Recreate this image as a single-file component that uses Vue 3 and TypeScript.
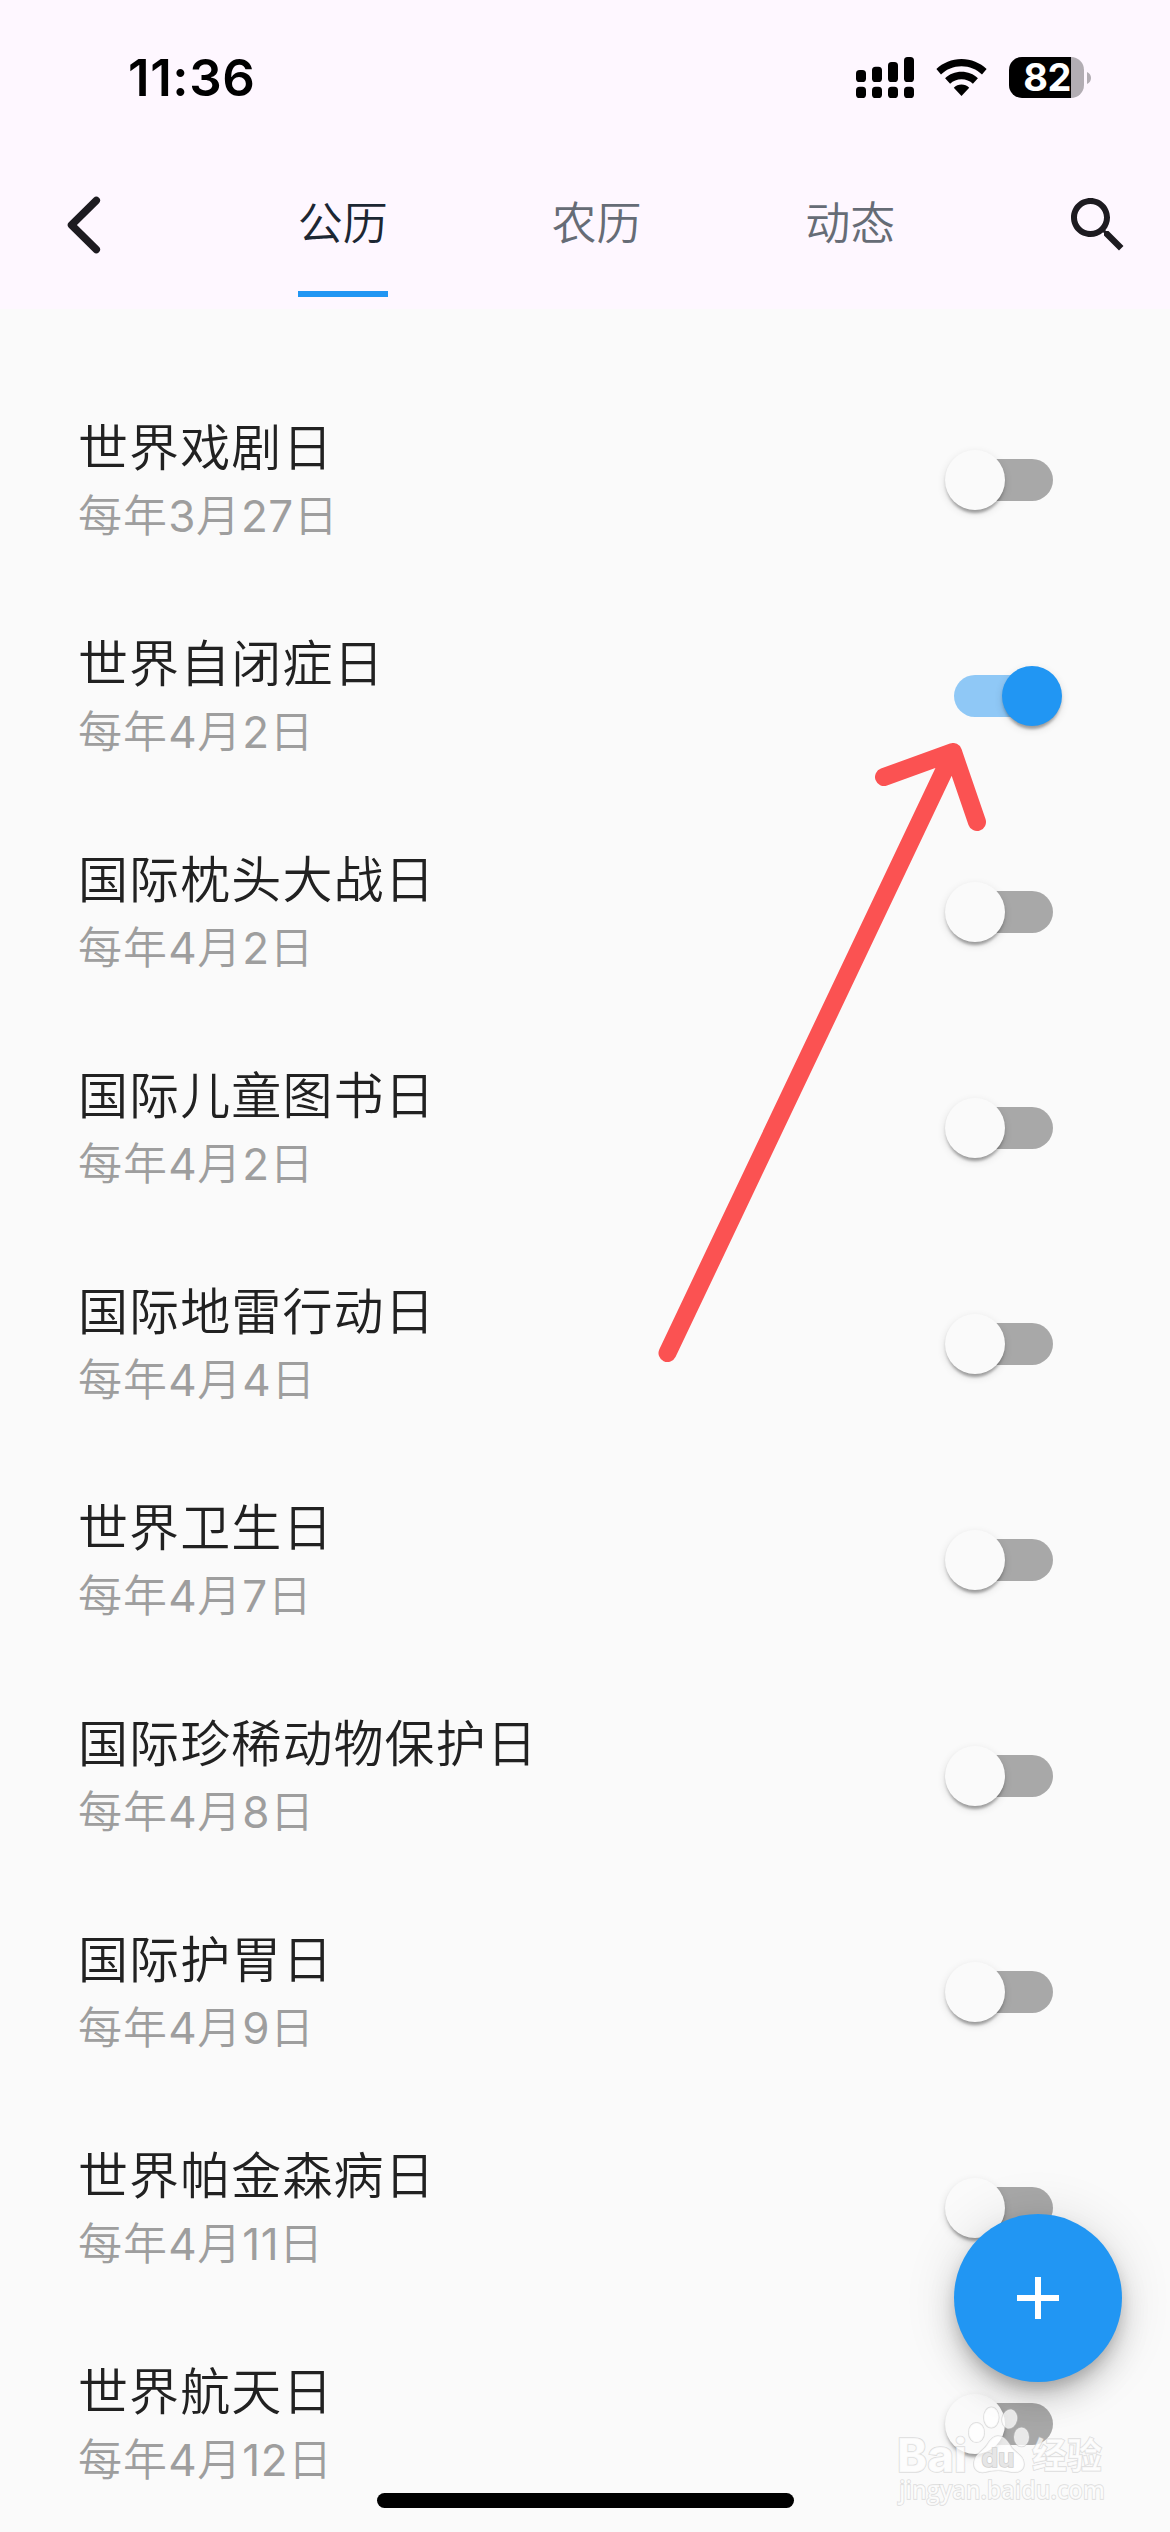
<script setup lang="ts">
import { ref } from 'vue'

interface Festival {
  name: string
  month: number
  day: number
  enabled: boolean
}

const tabs: string[] = ['公历', '农历', '动态']
const activeTab = ref(0)

const festivals = ref<Festival[]>([
  { name: '世界戏剧日', month: 3, day: 27, enabled: false },
  { name: '世界自闭症日', month: 4, day: 2, enabled: true },
  { name: '国际枕头大战日', month: 4, day: 2, enabled: false },
  { name: '国际儿童图书日', month: 4, day: 2, enabled: false },
  { name: '国际地雷行动日', month: 4, day: 4, enabled: false },
  { name: '世界卫生日', month: 4, day: 7, enabled: false },
  { name: '国际珍稀动物保护日', month: 4, day: 8, enabled: false },
  { name: '国际护胃日', month: 4, day: 9, enabled: false },
  { name: '世界帕金森病日', month: 4, day: 11, enabled: false },
  { name: '世界航天日', month: 4, day: 12, enabled: false },
])
</script>

<template>
  <div class="screen">
    <header class="header">
      <div class="status">
        <span class="time">11:36</span>
        <div class="indicators">
          <svg class="signal" width="58" height="41" viewBox="0 0 58 41">
            <rect x="0" y="13" width="10" height="12" rx="3.6" />
            <rect x="16" y="9.7" width="10" height="15.3" rx="3.6" />
            <rect x="32" y="5" width="10" height="20" rx="3.6" />
            <rect x="48" y="0" width="10" height="25" rx="3.6" />
            <rect v-for="i in 4" :key="i" :x="(i - 1) * 16" y="29.8" width="10" height="11.2" rx="3.6" />
          </svg>
          <svg class="wifi" width="51" height="37" viewBox="0 0 51 37">
            <path d="M25.5 0C35.2 0 44.200 3.800 50.600 10.100L46 15.600C40.600 10.300 33.400 7.300 25.500 7.300S10.400 10.300 5 15.600L.4 10.100C6.800 3.800 15.800 0 25.500 0Z" />
            <path d="M25.500 12.800C31.800 12.800 37.600 15.200 41.900 19.200L36.900 24.800C33.900 22 29.900 20.300 25.500 20.300S17.100 22 14.100 24.800L9.100 19.200C13.400 15.200 19.200 12.800 25.500 12.800Z" />
            <path d="M25.500 25.600C28.400 25.600 31.100 26.700 33.200 28.700L25.500 37L17.800 28.700C19.900 26.700 22.600 25.600 25.500 25.600Z" />
          </svg>
          <div class="battery">
            <span class="level">82</span>
          </div>
          <svg class="nub" width="4" height="12" viewBox="0 0 4 12"><path d="M0 0C2.400 1 4 3.200 4 6S2.400 11 0 12Z" /></svg>
        </div>
      </div>
      <nav class="bar">
        <svg class="back" width="72" height="72" viewBox="0 0 72 72">
          <path d="M48.300 11.500L23.500 36L48.300 60.500" />
        </svg>
        <div class="tabs">
          <button
            v-for="(tab, i) in tabs"
            :key="tab"
            class="tab"
            :class="{ active: i === activeTab }"
            @click="activeTab = i"
          >
            <span class="label">{{ tab }}</span>
          </button>
        </div>
        <svg class="search" width="72" height="72" viewBox="0 0 24 24">
          <path d="M15.500 14h-.79l-.28-.27C15.410 12.590 16 11.110 16 9.500 16 5.910 13.090 3 9.500 3S3 5.910 3 9.500 5.910 16 9.500 16c1.610 0 3.090-.59 4.230-1.570l.27.28v.79l5 4.990L20.490 19l-4.990-5zm-6 0C7.010 14 5 11.990 5 9.500S7.010 5 9.500 5 14 7.010 14 9.500 11.990 14 9.500 14z" />
        </svg>
      </nav>
    </header>

    <main class="list">
      <div v-for="item in festivals" :key="item.name" class="row">
        <div class="text">
          <div class="name">{{ item.name }}</div>
          <div class="date">每年<span class="num">{{ item.month }}</span>月<span class="num">{{ item.day }}</span>日</div>
        </div>
        <div class="switch" :class="{ on: item.enabled }" @click="item.enabled = !item.enabled">
          <span class="thumb"></span>
        </div>
      </div>
    </main>

    <svg class="arrow" width="350" height="640" viewBox="650 730 350 640">
      <path d="M667.500 1353L953 752M884 777L953 752L977 822" />
    </svg>

    <button class="fab">
      <svg width="72" height="72" viewBox="0 0 24 24"><path d="M19 13h-6v6h-2v-6H5v-2h6V5h2v6h6v2z" /></svg>
    </button>

    <svg class="watermark" width="230" height="130" viewBox="0 0 230 130">
      <ellipse cx="86.500" cy="42.500" rx="7.800" ry="9.800" />
      <ellipse cx="101.300" cy="27.500" rx="7.500" ry="10.200" />
      <ellipse cx="119.600" cy="29" rx="7.500" ry="9.600" transform="rotate(12 119.600 29)" />
      <ellipse cx="131.500" cy="47" rx="7.500" ry="9.600" />
      <path d="M108 46C115 46 118 52 122 58C126 63 134 66 134 74C134 81 128 83 121 82C113 80 103 80 96 82C88 84 83 79 84 72C85 64 93 61 97 55C100 50 103 46 108 46Z" />
      <text class="brand" x="7" y="81.500" textLength="70" lengthAdjust="spacingAndGlyphs">Bai</text>
      <text class="du" x="91.500" y="77" textLength="33" lengthAdjust="spacingAndGlyphs">du</text>
      <text class="cjk" x="142" y="79" textLength="70" lengthAdjust="spacingAndGlyphs">经验</text>
      <text class="url" x="9" y="109" textLength="206" lengthAdjust="spacingAndGlyphs">jingyan.baidu.com</text>
    </svg>

    <div class="home"></div>
  </div>
</template>

<style>
body {
  margin: 0;
  background: #fafafa;
}
</style>

<style scoped>
.screen {
  position: relative;
  width: 1170px;
  height: 2532px;
  overflow: hidden;
  background: #fafafa;
  font-family: Inter, 'Noto Sans CJK SC', sans-serif;
}

.header {
  height: 309px;
  background: #fef7ff;
}

.status {
  display: flex;
  justify-content: space-between;
  align-items: center;
  height: 155px;
  padding: 0 79px 0 128px;
}

.time {
  font-size: 51px;
  line-height: 60px;
  font-weight: 600;
  letter-spacing: 0.6px;
  color: #000;
}

.indicators {
  display: flex;
  align-items: center;
}

.wifi {
  margin-left: 22px;
}

.battery {
  display: flex;
  align-items: center;
  justify-content: flex-end;
  box-sizing: border-box;
  width: 75px;
  height: 41px;
  margin-left: 22px;
  padding-right: 13px;
  border-radius: 13px;
  background: linear-gradient(to right, #000 62px, #b2adb3 62px);
}

.level {
  font-size: 38px;
  line-height: 41px;
  font-weight: 650;
  letter-spacing: -0.5px;
  color: #fff;
}

.nub {
  margin-left: 3px;
  fill: #b2adb3;
}

.bar {
  display: flex;
  height: 154px;
  padding: 0 36px 0 48px;
}

.back,
.search {
  flex: none;
  margin-top: 34px;
}

.back {
  fill: none;
  stroke: #1d1b20;
  stroke-width: 7.5;
  stroke-linecap: round;
  stroke-linejoin: round;
}

.search {
  fill: #1d1b20;
}

.tabs {
  display: flex;
  flex: 1;
  padding: 0 85px 0 96px;
}

.tab {
  display: flex;
  flex: 1;
  justify-content: center;
  padding: 0;
  border: 0;
  background: none;
  font-family: inherit;
  font-size: 45px;
  font-weight: 350;
  color: #666c76;
}

.label {
  box-sizing: border-box;
  height: 142px;
  padding-top: 36px;
  border-bottom: 6px solid transparent;
  line-height: 66px;
}

.tab.active {
  color: #1c2733;
}

.tab.active .label {
  border-bottom-color: #2196f3;
}

.list {
  padding-top: 63px;
}

.row {
  display: flex;
  align-items: center;
  justify-content: space-between;
  height: 216px;
  padding: 0 117px 0 78px;
}

.name {
  margin-top: 4px;
  font-size: 50px;
  line-height: 70px;
  font-weight: 350;
  letter-spacing: 1.1px;
  color: #212121;
}

.date {
  margin-bottom: 2px;
  font-size: 44px;
  line-height: 66px;
  font-weight: 350;
  letter-spacing: 1.1px;
  color: #9e9e9e;
}

.num {
  font-weight: 400;
  letter-spacing: 0.5px;
  font-kerning: none;
}

.switch {
  display: flex;
  align-items: center;
  width: 99px;
  height: 42px;
  border-radius: 21px;
  background: #a8a8a8;
}

.thumb {
  flex: none;
  width: 60px;
  height: 60px;
  margin-left: -9px;
  border-radius: 50%;
  background: #fafafa;
  box-shadow:
    0 6px 3px -3px rgba(0, 0, 0, 0.2),
    0 3px 3px rgba(0, 0, 0, 0.14),
    0 3px 9px rgba(0, 0, 0, 0.12);
}

.switch.on {
  background: #8fc8f6;
}

.switch.on .thumb {
  margin-left: 48px;
  background: #2196f3;
}

.arrow {
  position: absolute;
  left: 650px;
  top: 730px;
  fill: none;
  stroke: #fb5252;
  stroke-width: 18;
  stroke-linecap: round;
  stroke-linejoin: round;
}

.fab {
  position: absolute;
  left: 954px;
  top: 2214px;
  display: flex;
  align-items: center;
  justify-content: center;
  width: 168px;
  height: 168px;
  padding: 0;
  border: 0;
  border-radius: 50%;
  background: #2196f3;
  box-shadow:
    0 9px 15px -3px rgba(0, 0, 0, 0.2),
    0 18px 30px rgba(0, 0, 0, 0.14),
    0 3px 54px rgba(0, 0, 0, 0.12);
}

.fab svg {
  fill: #fff;
}

.watermark {
  position: absolute;
  left: 890px;
  top: 2390px;
  overflow: visible;
  fill: rgba(255, 255, 255, 0.75);
  stroke: rgba(195, 195, 195, 0.55);
  stroke-width: 1.5;
  paint-order: stroke;
}

.brand {
  font-family: Inter, sans-serif;
  font-size: 46px;
  font-weight: 800;
}

.du {
  fill: #e6e6e6;
  stroke: #d0d0d0;
  font-family: Inter, sans-serif;
  font-size: 25px;
  font-weight: 700;
}

.cjk {
  font-family: 'Noto Sans CJK SC', sans-serif;
  font-size: 36px;
  font-weight: 700;
}

.url {
  font-family: 'Open Sans', sans-serif;
  font-size: 26px;
  font-weight: 600;
}

.home {
  position: absolute;
  left: 377px;
  top: 2493px;
  width: 417px;
  height: 15px;
  border-radius: 8px;
  background: #000;
}
</style>
